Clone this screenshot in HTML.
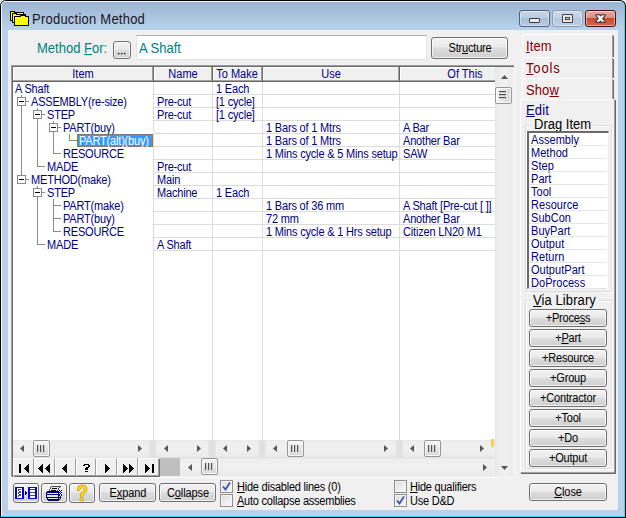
<!DOCTYPE html><html><head><meta charset="utf-8"><style>
html,body{margin:0;padding:0;width:626px;height:518px;overflow:hidden;background:#fff;}
*{box-sizing:border-box;}
div{position:absolute;}
.t{position:absolute;white-space:pre;line-height:1;font-family:"Liberation Sans",sans-serif;}
u{text-decoration:underline;text-decoration-thickness:1px;text-underline-offset:1px;text-decoration-skip-ink:none;}
.btn{border:1px solid #707070;border-radius:3px;background:linear-gradient(#f2f2f2 0%,#ebebeb 45%,#dddddd 50%,#cfcfcf 100%);box-shadow:inset 0 0 0 1px rgba(255,255,255,0.7);}
</style></head><body>
<div style="position:absolute;left:0px;top:0px;width:626px;height:518px;background:#000;border-radius:6px 6px 0 0;"></div>
<div style="position:absolute;left:1px;top:1px;width:624px;height:516px;background:#3fd8f0;border-radius:5px 5px 0 0;"></div>
<div style="position:absolute;left:1px;top:1px;width:623px;height:515px;background:#f4f8fc;border-radius:5px 5px 0 0;"></div>
<div style="position:absolute;left:2px;top:2px;width:622px;height:514px;background:#b9d1ea;border-radius:4px 4px 0 0;"></div>
<div style="position:absolute;left:2px;top:2px;width:622px;height:28px;background:linear-gradient(#9cb4d1,#b9d3eb);border-radius:4px 4px 0 0;"></div>
<div style="position:absolute;left:8px;top:30px;width:610px;height:480px;background:#f0f0f0;"></div>
<svg style="position:absolute;left:10px;top:11px" width="19" height="15" shape-rendering="crispEdges"><rect x="0" y="0" width="5" height="1" fill="#000000"/><rect x="0" y="1" width="1" height="1" fill="#000000"/><rect x="1" y="1" width="3" height="1" fill="#ffff00"/><rect x="4" y="1" width="10" height="1" fill="#000000"/><rect x="0" y="2" width="1" height="1" fill="#000000"/><rect x="1" y="2" width="1" height="1" fill="#ffff00"/><rect x="2" y="2" width="5" height="1" fill="#000000"/><rect x="7" y="2" width="6" height="1" fill="#ffff00"/><rect x="13" y="2" width="1" height="1" fill="#000000"/><rect x="0" y="3" width="1" height="1" fill="#000000"/><rect x="1" y="3" width="1" height="1" fill="#ffff00"/><rect x="2" y="3" width="1" height="1" fill="#000000"/><rect x="3" y="3" width="3" height="1" fill="#ffff00"/><rect x="6" y="3" width="10" height="1" fill="#000000"/><rect x="0" y="4" width="1" height="1" fill="#000000"/><rect x="1" y="4" width="1" height="1" fill="#ffff00"/><rect x="2" y="4" width="1" height="1" fill="#000000"/><rect x="3" y="4" width="7" height="1" fill="#ffff00"/><rect x="10" y="4" width="6" height="1" fill="#000000"/><rect x="0" y="5" width="1" height="1" fill="#000000"/><rect x="1" y="5" width="1" height="1" fill="#ffff00"/><rect x="2" y="5" width="1" height="1" fill="#000000"/><rect x="3" y="5" width="1" height="1" fill="#ffff00"/><rect x="4" y="5" width="7" height="1" fill="#000000"/><rect x="11" y="5" width="4" height="1" fill="#ffff00"/><rect x="15" y="5" width="4" height="1" fill="#000000"/><rect x="0" y="6" width="1" height="1" fill="#000000"/><rect x="1" y="6" width="1" height="1" fill="#ffff00"/><rect x="2" y="6" width="1" height="1" fill="#000000"/><rect x="3" y="6" width="1" height="1" fill="#ffff00"/><rect x="4" y="6" width="1" height="1" fill="#000000"/><rect x="5" y="6" width="13" height="1" fill="#ffff00"/><rect x="18" y="6" width="1" height="1" fill="#000000"/><rect x="0" y="7" width="1" height="1" fill="#000000"/><rect x="1" y="7" width="1" height="1" fill="#ffff00"/><rect x="2" y="7" width="1" height="1" fill="#000000"/><rect x="3" y="7" width="1" height="1" fill="#ffff00"/><rect x="4" y="7" width="1" height="1" fill="#000000"/><rect x="5" y="7" width="13" height="1" fill="#ffff00"/><rect x="18" y="7" width="1" height="1" fill="#000000"/><rect x="0" y="8" width="1" height="1" fill="#000000"/><rect x="1" y="8" width="1" height="1" fill="#ffff00"/><rect x="2" y="8" width="1" height="1" fill="#000000"/><rect x="3" y="8" width="1" height="1" fill="#ffff00"/><rect x="4" y="8" width="1" height="1" fill="#000000"/><rect x="5" y="8" width="13" height="1" fill="#ffff00"/><rect x="18" y="8" width="1" height="1" fill="#000000"/><rect x="0" y="9" width="3" height="1" fill="#000000"/><rect x="3" y="9" width="1" height="1" fill="#ffff00"/><rect x="4" y="9" width="1" height="1" fill="#000000"/><rect x="5" y="9" width="13" height="1" fill="#ffff00"/><rect x="18" y="9" width="1" height="1" fill="#000000"/><rect x="2" y="10" width="1" height="1" fill="#000000"/><rect x="3" y="10" width="1" height="1" fill="#ffff00"/><rect x="4" y="10" width="1" height="1" fill="#000000"/><rect x="5" y="10" width="13" height="1" fill="#ffff00"/><rect x="18" y="10" width="1" height="1" fill="#000000"/><rect x="2" y="11" width="3" height="1" fill="#000000"/><rect x="5" y="11" width="13" height="1" fill="#ffff00"/><rect x="18" y="11" width="1" height="1" fill="#000000"/><rect x="4" y="12" width="1" height="1" fill="#000000"/><rect x="5" y="12" width="13" height="1" fill="#ffff00"/><rect x="18" y="12" width="1" height="1" fill="#000000"/><rect x="4" y="13" width="1" height="1" fill="#000000"/><rect x="5" y="13" width="13" height="1" fill="#ffff00"/><rect x="18" y="13" width="1" height="1" fill="#000000"/><rect x="4" y="14" width="15" height="1" fill="#000000"/></svg>
<div class="t" style="left:32px;top:12px;font-size:14px;color:#1a1424;letter-spacing:0.25px;transform:scaleX(0.9286);transform-origin:0 0;">Production Method</div>
<div style="left:519px;top:10px;width:31px;height:17px;border:1px solid #4f617a;border-radius:3px;background:linear-gradient(#c7d6e8 0%,#bccde2 45%,#a9bfd9 50%,#b6cbe3 100%);box-shadow:inset 0 0 0 1px rgba(255,255,255,0.45);"></div>
<div style="left:552px;top:10px;width:31px;height:17px;border:1px solid #8a9bb0;border-radius:3px;background:linear-gradient(#c9d8ea 0%,#c3d3e6 45%,#b3c7de 50%,#bccfe5 100%);box-shadow:inset 0 0 0 1px rgba(255,255,255,0.45);"></div>
<div style="left:585px;top:10px;width:31px;height:17px;border:1px solid #4a0f12;border-radius:3px;background:linear-gradient(#e9a99c 0%,#df8f7d 45%,#c94c2f 50%,#d2694c 100%);box-shadow:inset 0 0 0 1px rgba(255,255,255,0.45);"></div>
<div style="position:absolute;left:529px;top:18px;width:11px;height:5px;background:#f0eeea;border:1px solid #353a45;border-radius:1px;"></div>
<div style="position:absolute;left:562px;top:14px;width:11px;height:9px;border:1px solid #3d4352;background:#3d4352;border-radius:1px;"></div>
<div style="position:absolute;left:563px;top:15px;width:9px;height:7px;background:#ebe6de;"></div>
<div style="position:absolute;left:565px;top:17px;width:5px;height:3px;border:1px solid #3d4352;background:#c8d0da;"></div>
<svg style="position:absolute;left:585px;top:10px" width="31" height="17">
<g stroke="#2a2d3c" stroke-width="2" stroke-linejoin="round" fill="#2a2d3c">
<polygon points="11.2,5.2 14.4,5.2 19.8,11.8 16.6,11.8"/>
<polygon points="16.6,5.2 19.8,5.2 14.4,11.8 11.2,11.8"/>
</g>
<g fill="#f4f4f4">
<polygon points="11.2,5.2 14.4,5.2 19.8,11.8 16.6,11.8"/>
<polygon points="16.6,5.2 19.8,5.2 14.4,11.8 11.2,11.8"/>
</g>
</svg>
<div class="t" style="left:37px;top:41px;font-size:14px;color:#008080;letter-spacing:0px;transform:scaleX(0.9286);transform-origin:0 0;">Method <u>F</u>or:</div>
<div class="btn" style="left:113px;top:41px;width:18px;height:18px;"></div>
<svg style="position:absolute;left:118px;top:53px" width="11" height="2" shape-rendering="crispEdges"><rect x="0" y="0" width="1" height="1" fill="#000"/><rect x="3" y="0" width="1" height="1" fill="#000"/><rect x="6" y="0" width="1" height="1" fill="#000"/></svg>
<svg style="position:absolute;left:119px;top:53px" width="7" height="1" shape-rendering="crispEdges"><rect x="0" y="0" width="1" height="1" fill="#808080"/><rect x="3" y="0" width="1" height="1" fill="#808080"/><rect x="6" y="0" width="1" height="1" fill="#808080"/></svg>
<svg style="position:absolute;left:118px;top:54px" width="7" height="1" shape-rendering="crispEdges"><rect x="0" y="0" width="1" height="1" fill="#a0a0a0"/><rect x="3" y="0" width="1" height="1" fill="#a0a0a0"/><rect x="6" y="0" width="1" height="1" fill="#a0a0a0"/></svg>
<div style="position:absolute;left:136px;top:35px;width:291px;height:25px;background:#fff;border:1px solid #e2e3ea;border-top-color:#abadb3;"></div>
<div class="t" style="left:139px;top:41px;font-size:14px;color:#008080;transform:scaleX(0.9286);transform-origin:0 0;">A Shaft</div>
<div class="btn" style="left:431px;top:37px;width:77px;height:22px;"></div>
<div class="t" style="left:269.5px;width:400px;text-align:center;top:42px;font-size:12px;color:#000;letter-spacing:-0.2px;transform:scaleX(0.9167);transform-origin:50% 0;">Str<u>u</u>cture</div>
<div style="position:absolute;left:13px;top:82px;width:482px;height:358px;background:#fff;"></div>
<div style="position:absolute;left:11px;top:65px;width:1px;height:412px;background:#a0a0a0;"></div>
<div style="position:absolute;left:12px;top:66px;width:1px;height:411px;background:#696969;"></div>
<div style="position:absolute;left:11px;top:65px;width:503px;height:1px;background:#a0a0a0;"></div>
<div style="position:absolute;left:12px;top:66px;width:502px;height:1px;background:#696969;"></div>
<div style="position:absolute;left:13px;top:67px;width:482px;height:13px;background:#f0f0f0;"></div>
<div style="position:absolute;left:13px;top:80px;width:482px;height:1px;background:#a0a0a0;"></div>
<div style="position:absolute;left:13px;top:81px;width:482px;height:1px;background:#696969;"></div>
<div style="position:absolute;left:13px;top:67px;width:139px;height:1px;background:#fff;"></div>
<div style="position:absolute;left:13px;top:67px;width:1px;height:13px;background:#fff;"></div>
<div style="position:absolute;left:154px;top:67px;width:57px;height:1px;background:#fff;"></div>
<div style="position:absolute;left:154px;top:67px;width:1px;height:13px;background:#fff;"></div>
<div style="position:absolute;left:213px;top:67px;width:48px;height:1px;background:#fff;"></div>
<div style="position:absolute;left:213px;top:67px;width:1px;height:13px;background:#fff;"></div>
<div style="position:absolute;left:263px;top:67px;width:135px;height:1px;background:#fff;"></div>
<div style="position:absolute;left:263px;top:67px;width:1px;height:13px;background:#fff;"></div>
<div style="position:absolute;left:400px;top:67px;width:95px;height:1px;background:#fff;"></div>
<div style="position:absolute;left:400px;top:67px;width:1px;height:13px;background:#fff;"></div>
<div style="position:absolute;left:152px;top:67px;width:1px;height:13px;background:#a0a0a0;"></div>
<div style="position:absolute;left:153px;top:67px;width:1px;height:14px;background:#696969;"></div>
<div style="position:absolute;left:211px;top:67px;width:1px;height:13px;background:#a0a0a0;"></div>
<div style="position:absolute;left:212px;top:67px;width:1px;height:14px;background:#696969;"></div>
<div style="position:absolute;left:261px;top:67px;width:1px;height:13px;background:#a0a0a0;"></div>
<div style="position:absolute;left:262px;top:67px;width:1px;height:14px;background:#696969;"></div>
<div style="position:absolute;left:398px;top:67px;width:1px;height:13px;background:#a0a0a0;"></div>
<div style="position:absolute;left:399px;top:67px;width:1px;height:14px;background:#696969;"></div>
<div class="t" style="left:-117.5px;width:400px;text-align:center;top:68px;font-size:12px;color:#000080;transform:scaleX(0.9167);transform-origin:50% 0;">Item</div>
<div class="t" style="left:-17.5px;width:400px;text-align:center;top:68px;font-size:12px;color:#000080;transform:scaleX(0.9167);transform-origin:50% 0;">Name</div>
<div class="t" style="left:37px;width:400px;text-align:center;top:68px;font-size:12px;color:#000080;transform:scaleX(0.9167);transform-origin:50% 0;">To Make</div>
<div class="t" style="left:130.5px;width:400px;text-align:center;top:68px;font-size:12px;color:#000080;transform:scaleX(0.9167);transform-origin:50% 0;">Use</div>
<div class="t" style="left:265px;width:400px;text-align:center;top:68px;font-size:12px;color:#000080;transform:scaleX(0.9167);transform-origin:50% 0;">Of This</div>
<div style="position:absolute;left:153px;top:82px;width:1px;height:358px;background:#dcdcdc;"></div>
<div style="position:absolute;left:212px;top:82px;width:1px;height:358px;background:#dcdcdc;"></div>
<div style="position:absolute;left:262px;top:82px;width:1px;height:358px;background:#dcdcdc;"></div>
<div style="position:absolute;left:399px;top:82px;width:1px;height:358px;background:#dcdcdc;"></div>
<div style="position:absolute;left:153px;top:94px;width:342px;height:1px;background:#dcdcdc;"></div>
<div style="position:absolute;left:153px;top:107px;width:342px;height:1px;background:#dcdcdc;"></div>
<div style="position:absolute;left:153px;top:120px;width:342px;height:1px;background:#dcdcdc;"></div>
<div style="position:absolute;left:153px;top:133px;width:342px;height:1px;background:#dcdcdc;"></div>
<div style="position:absolute;left:153px;top:146px;width:342px;height:1px;background:#dcdcdc;"></div>
<div style="position:absolute;left:153px;top:159px;width:342px;height:1px;background:#dcdcdc;"></div>
<div style="position:absolute;left:153px;top:172px;width:342px;height:1px;background:#dcdcdc;"></div>
<div style="position:absolute;left:153px;top:185px;width:342px;height:1px;background:#dcdcdc;"></div>
<div style="position:absolute;left:153px;top:198px;width:342px;height:1px;background:#dcdcdc;"></div>
<div style="position:absolute;left:153px;top:211px;width:342px;height:1px;background:#dcdcdc;"></div>
<div style="position:absolute;left:153px;top:224px;width:342px;height:1px;background:#dcdcdc;"></div>
<div style="position:absolute;left:153px;top:237px;width:342px;height:1px;background:#dcdcdc;"></div>
<div style="position:absolute;left:153px;top:250px;width:342px;height:1px;background:#dcdcdc;"></div>
<div class="t" style="left:15px;top:83px;font-size:12px;color:#000080;letter-spacing:-0.2px;transform:scaleX(0.9167);transform-origin:0 0;">A Shaft</div>
<div class="t" style="left:216px;top:83px;font-size:12px;color:#000080;letter-spacing:-0.2px;transform:scaleX(0.9167);transform-origin:0 0;">1 Each</div>
<div class="t" style="left:31px;top:96px;font-size:12px;color:#000080;letter-spacing:-0.2px;transform:scaleX(0.9167);transform-origin:0 0;">ASSEMBLY(re-size)</div>
<div class="t" style="left:157px;top:96px;font-size:12px;color:#000080;letter-spacing:-0.2px;transform:scaleX(0.9167);transform-origin:0 0;">Pre-cut</div>
<div class="t" style="left:216px;top:96px;font-size:12px;color:#000080;letter-spacing:-0.2px;transform:scaleX(0.9167);transform-origin:0 0;">[1 cycle]</div>
<div class="t" style="left:47px;top:109px;font-size:12px;color:#000080;letter-spacing:-0.2px;transform:scaleX(0.9167);transform-origin:0 0;">STEP</div>
<div class="t" style="left:157px;top:109px;font-size:12px;color:#000080;letter-spacing:-0.2px;transform:scaleX(0.9167);transform-origin:0 0;">Pre-cut</div>
<div class="t" style="left:216px;top:109px;font-size:12px;color:#000080;letter-spacing:-0.2px;transform:scaleX(0.9167);transform-origin:0 0;">[1 cycle]</div>
<div class="t" style="left:63px;top:122px;font-size:12px;color:#000080;letter-spacing:-0.2px;transform:scaleX(0.9167);transform-origin:0 0;">PART(buy)</div>
<div class="t" style="left:266px;top:122px;font-size:12px;color:#000080;letter-spacing:-0.2px;transform:scaleX(0.9167);transform-origin:0 0;">1 Bars of 1 Mtrs</div>
<div class="t" style="left:403px;top:122px;font-size:12px;color:#000080;letter-spacing:-0.2px;transform:scaleX(0.9167);transform-origin:0 0;">A Bar</div>
<div style="position:absolute;left:77px;top:134px;width:76px;height:13px;background:#3399ff;border:1px dotted #c06000;"></div>
<div class="t" style="left:79px;top:135px;font-size:12px;color:#fff;letter-spacing:-0.2px;transform:scaleX(0.9167);transform-origin:0 0;">PART(alt)(buy)</div>
<div class="t" style="left:266px;top:135px;font-size:12px;color:#000080;letter-spacing:-0.2px;transform:scaleX(0.9167);transform-origin:0 0;">1 Bars of 1 Mtrs</div>
<div class="t" style="left:403px;top:135px;font-size:12px;color:#000080;letter-spacing:-0.2px;transform:scaleX(0.9167);transform-origin:0 0;">Another Bar</div>
<div class="t" style="left:63px;top:148px;font-size:12px;color:#000080;letter-spacing:-0.2px;transform:scaleX(0.9167);transform-origin:0 0;">RESOURCE</div>
<div class="t" style="left:266px;top:148px;font-size:12px;color:#000080;letter-spacing:-0.2px;transform:scaleX(0.9167);transform-origin:0 0;">1 Mins cycle &amp; 5 Mins setup</div>
<div class="t" style="left:403px;top:148px;font-size:12px;color:#000080;letter-spacing:-0.2px;transform:scaleX(0.9167);transform-origin:0 0;">SAW</div>
<div class="t" style="left:47px;top:161px;font-size:12px;color:#000080;letter-spacing:-0.2px;transform:scaleX(0.9167);transform-origin:0 0;">MADE</div>
<div class="t" style="left:157px;top:161px;font-size:12px;color:#000080;letter-spacing:-0.2px;transform:scaleX(0.9167);transform-origin:0 0;">Pre-cut</div>
<div class="t" style="left:31px;top:174px;font-size:12px;color:#000080;letter-spacing:-0.2px;transform:scaleX(0.9167);transform-origin:0 0;">METHOD(make)</div>
<div class="t" style="left:157px;top:174px;font-size:12px;color:#000080;letter-spacing:-0.2px;transform:scaleX(0.9167);transform-origin:0 0;">Main</div>
<div class="t" style="left:47px;top:187px;font-size:12px;color:#000080;letter-spacing:-0.2px;transform:scaleX(0.9167);transform-origin:0 0;">STEP</div>
<div class="t" style="left:157px;top:187px;font-size:12px;color:#000080;letter-spacing:-0.2px;transform:scaleX(0.9167);transform-origin:0 0;">Machine</div>
<div class="t" style="left:216px;top:187px;font-size:12px;color:#000080;letter-spacing:-0.2px;transform:scaleX(0.9167);transform-origin:0 0;">1 Each</div>
<div class="t" style="left:63px;top:200px;font-size:12px;color:#000080;letter-spacing:-0.2px;transform:scaleX(0.9167);transform-origin:0 0;">PART(make)</div>
<div class="t" style="left:266px;top:200px;font-size:12px;color:#000080;letter-spacing:-0.2px;transform:scaleX(0.9167);transform-origin:0 0;">1 Bars of 36 mm</div>
<div class="t" style="left:403px;top:200px;font-size:12px;color:#000080;letter-spacing:-0.2px;transform:scaleX(0.9167);transform-origin:0 0;">A Shaft [Pre-cut [ ]]</div>
<div class="t" style="left:63px;top:213px;font-size:12px;color:#000080;letter-spacing:-0.2px;transform:scaleX(0.9167);transform-origin:0 0;">PART(buy)</div>
<div class="t" style="left:266px;top:213px;font-size:12px;color:#000080;letter-spacing:-0.2px;transform:scaleX(0.9167);transform-origin:0 0;">72 mm</div>
<div class="t" style="left:403px;top:213px;font-size:12px;color:#000080;letter-spacing:-0.2px;transform:scaleX(0.9167);transform-origin:0 0;">Another Bar</div>
<div class="t" style="left:63px;top:226px;font-size:12px;color:#000080;letter-spacing:-0.2px;transform:scaleX(0.9167);transform-origin:0 0;">RESOURCE</div>
<div class="t" style="left:266px;top:226px;font-size:12px;color:#000080;letter-spacing:-0.2px;transform:scaleX(0.9167);transform-origin:0 0;">1 Mins cycle &amp; 1 Hrs setup</div>
<div class="t" style="left:403px;top:226px;font-size:12px;color:#000080;letter-spacing:-0.2px;transform:scaleX(0.9167);transform-origin:0 0;">Citizen LN20 M1</div>
<div class="t" style="left:47px;top:239px;font-size:12px;color:#000080;letter-spacing:-0.2px;transform:scaleX(0.9167);transform-origin:0 0;">MADE</div>
<div class="t" style="left:157px;top:239px;font-size:12px;color:#000080;letter-spacing:-0.2px;transform:scaleX(0.9167);transform-origin:0 0;">A Shaft</div>
<div style="position:absolute;left:21px;top:95px;width:1px;height:2px;background:#8a8a8a;"></div>
<div style="position:absolute;left:17px;top:97px;width:9px;height:9px;border:1px solid #8a8a8a;background:#fff;"></div>
<div style="position:absolute;left:19px;top:101px;width:5px;height:1px;background:#000;"></div>
<div style="position:absolute;left:26px;top:101px;width:3px;height:1px;background:#8a8a8a;"></div>
<div style="position:absolute;left:21px;top:106px;width:1px;height:67px;background:#8a8a8a;"></div>
<div style="position:absolute;left:37px;top:108px;width:1px;height:2px;background:#8a8a8a;"></div>
<div style="position:absolute;left:33px;top:110px;width:9px;height:9px;border:1px solid #8a8a8a;background:#fff;"></div>
<div style="position:absolute;left:35px;top:114px;width:5px;height:1px;background:#000;"></div>
<div style="position:absolute;left:42px;top:114px;width:3px;height:1px;background:#8a8a8a;"></div>
<div style="position:absolute;left:37px;top:119px;width:1px;height:41px;background:#8a8a8a;"></div>
<div style="position:absolute;left:53px;top:121px;width:1px;height:2px;background:#8a8a8a;"></div>
<div style="position:absolute;left:49px;top:123px;width:9px;height:9px;border:1px solid #8a8a8a;background:#fff;"></div>
<div style="position:absolute;left:51px;top:127px;width:5px;height:1px;background:#000;"></div>
<div style="position:absolute;left:58px;top:127px;width:3px;height:1px;background:#8a8a8a;"></div>
<div style="position:absolute;left:53px;top:132px;width:1px;height:15px;background:#8a8a8a;"></div>
<div style="position:absolute;left:69px;top:134px;width:1px;height:7px;background:#8a8a8a;"></div>
<div style="position:absolute;left:69px;top:140px;width:8px;height:1px;background:#8a8a8a;"></div>
<div style="position:absolute;left:53px;top:147px;width:1px;height:7px;background:#8a8a8a;"></div>
<div style="position:absolute;left:53px;top:153px;width:8px;height:1px;background:#8a8a8a;"></div>
<div style="position:absolute;left:37px;top:160px;width:1px;height:7px;background:#8a8a8a;"></div>
<div style="position:absolute;left:37px;top:166px;width:8px;height:1px;background:#8a8a8a;"></div>
<div style="position:absolute;left:21px;top:173px;width:1px;height:2px;background:#8a8a8a;"></div>
<div style="position:absolute;left:17px;top:175px;width:9px;height:9px;border:1px solid #8a8a8a;background:#fff;"></div>
<div style="position:absolute;left:19px;top:179px;width:5px;height:1px;background:#000;"></div>
<div style="position:absolute;left:26px;top:179px;width:3px;height:1px;background:#8a8a8a;"></div>
<div style="position:absolute;left:37px;top:186px;width:1px;height:2px;background:#8a8a8a;"></div>
<div style="position:absolute;left:33px;top:188px;width:9px;height:9px;border:1px solid #8a8a8a;background:#fff;"></div>
<div style="position:absolute;left:35px;top:192px;width:5px;height:1px;background:#000;"></div>
<div style="position:absolute;left:42px;top:192px;width:3px;height:1px;background:#8a8a8a;"></div>
<div style="position:absolute;left:37px;top:197px;width:1px;height:41px;background:#8a8a8a;"></div>
<div style="position:absolute;left:53px;top:199px;width:1px;height:7px;background:#8a8a8a;"></div>
<div style="position:absolute;left:53px;top:205px;width:8px;height:1px;background:#8a8a8a;"></div>
<div style="position:absolute;left:53px;top:205px;width:1px;height:7px;background:#8a8a8a;"></div>
<div style="position:absolute;left:53px;top:212px;width:1px;height:7px;background:#8a8a8a;"></div>
<div style="position:absolute;left:53px;top:218px;width:8px;height:1px;background:#8a8a8a;"></div>
<div style="position:absolute;left:53px;top:218px;width:1px;height:7px;background:#8a8a8a;"></div>
<div style="position:absolute;left:53px;top:225px;width:1px;height:7px;background:#8a8a8a;"></div>
<div style="position:absolute;left:53px;top:231px;width:8px;height:1px;background:#8a8a8a;"></div>
<div style="position:absolute;left:37px;top:238px;width:1px;height:7px;background:#8a8a8a;"></div>
<div style="position:absolute;left:37px;top:244px;width:8px;height:1px;background:#8a8a8a;"></div>
<div style="position:absolute;left:13px;top:440px;width:482px;height:18px;background:linear-gradient(#e6e6e6 0px,#eeeeee 1px,#f0f0f0 9px,#ebebeb 17px);"></div>
<div style="position:absolute;left:149px;top:440px;width:8px;height:18px;background:linear-gradient(90deg,#e6e6e6,#dedede 50%,#e6e6e6);"></div>
<div style="position:absolute;left:208px;top:440px;width:8px;height:18px;background:linear-gradient(90deg,#e6e6e6,#dedede 50%,#e6e6e6);"></div>
<div style="position:absolute;left:258px;top:440px;width:8px;height:18px;background:linear-gradient(90deg,#e6e6e6,#dedede 50%,#e6e6e6);"></div>
<div style="position:absolute;left:395px;top:440px;width:8px;height:18px;background:linear-gradient(90deg,#e6e6e6,#dedede 50%,#e6e6e6);"></div>
<svg style="position:absolute;left:20px;top:445px" width="4" height="7"><polygon points="4,0 0,3.5 4,7" fill="#565656"/></svg>
<svg style="position:absolute;left:138px;top:445px" width="4" height="7"><polygon points="0,0 4,3.5 0,7" fill="#565656"/></svg>
<svg style="position:absolute;left:164px;top:445px" width="4" height="7"><polygon points="4,0 0,3.5 4,7" fill="#565656"/></svg>
<svg style="position:absolute;left:197px;top:445px" width="4" height="7"><polygon points="0,0 4,3.5 0,7" fill="#565656"/></svg>
<svg style="position:absolute;left:223px;top:445px" width="4" height="7"><polygon points="4,0 0,3.5 4,7" fill="#565656"/></svg>
<svg style="position:absolute;left:247px;top:445px" width="4" height="7"><polygon points="0,0 4,3.5 0,7" fill="#565656"/></svg>
<svg style="position:absolute;left:273px;top:445px" width="4" height="7"><polygon points="4,0 0,3.5 4,7" fill="#565656"/></svg>
<svg style="position:absolute;left:384px;top:445px" width="4" height="7"><polygon points="0,0 4,3.5 0,7" fill="#565656"/></svg>
<svg style="position:absolute;left:410px;top:445px" width="4" height="7"><polygon points="4,0 0,3.5 4,7" fill="#565656"/></svg>
<svg style="position:absolute;left:480px;top:445px" width="4" height="7"><polygon points="0,0 4,3.5 0,7" fill="#565656"/></svg>
<div style="left:33px;top:440px;width:17px;height:17px;border:1px solid #979797;border-radius:2px;background:linear-gradient(#f6f6f6,#e6e6e6 50%,#d8d8d8);box-shadow:inset 0 0 0 1px rgba(255,255,255,.8);"></div>
<div style="position:absolute;left:37px;top:445px;width:2px;height:7px;background:linear-gradient(90deg,#505050 50%,#c8c8c8 50%);"></div>
<div style="position:absolute;left:40px;top:445px;width:2px;height:7px;background:linear-gradient(90deg,#505050 50%,#c8c8c8 50%);"></div>
<div style="position:absolute;left:43px;top:445px;width:2px;height:7px;background:linear-gradient(90deg,#505050 50%,#c8c8c8 50%);"></div>
<div style="left:287px;top:440px;width:17px;height:17px;border:1px solid #979797;border-radius:2px;background:linear-gradient(#f6f6f6,#e6e6e6 50%,#d8d8d8);box-shadow:inset 0 0 0 1px rgba(255,255,255,.8);"></div>
<div style="position:absolute;left:291px;top:445px;width:2px;height:7px;background:linear-gradient(90deg,#505050 50%,#c8c8c8 50%);"></div>
<div style="position:absolute;left:294px;top:445px;width:2px;height:7px;background:linear-gradient(90deg,#505050 50%,#c8c8c8 50%);"></div>
<div style="position:absolute;left:297px;top:445px;width:2px;height:7px;background:linear-gradient(90deg,#505050 50%,#c8c8c8 50%);"></div>
<div style="left:424px;top:440px;width:17px;height:17px;border:1px solid #979797;border-radius:2px;background:linear-gradient(#f6f6f6,#e6e6e6 50%,#d8d8d8);box-shadow:inset 0 0 0 1px rgba(255,255,255,.8);"></div>
<div style="position:absolute;left:428px;top:445px;width:2px;height:7px;background:linear-gradient(90deg,#505050 50%,#c8c8c8 50%);"></div>
<div style="position:absolute;left:431px;top:445px;width:2px;height:7px;background:linear-gradient(90deg,#505050 50%,#c8c8c8 50%);"></div>
<div style="position:absolute;left:434px;top:445px;width:2px;height:7px;background:linear-gradient(90deg,#505050 50%,#c8c8c8 50%);"></div>
<div style="position:absolute;left:491px;top:439px;width:3px;height:8px;background:#f8d050;"></div>
<div style="position:absolute;left:13px;top:457px;width:482px;height:1px;background:#e0e0e0;"></div>
<div style="left:13px;top:458px;width:21px;height:18px;background:#f0f0f0;border-left:1px solid #fff;border-top:1px solid #fff;border-right:1px solid #a0a0a0;border-bottom:1px solid #a0a0a0;box-shadow:1px 1px 0 #696969;"></div>
<div style="left:34px;top:458px;width:21px;height:18px;background:#f0f0f0;border-left:1px solid #fff;border-top:1px solid #fff;border-right:1px solid #a0a0a0;border-bottom:1px solid #a0a0a0;box-shadow:1px 1px 0 #696969;"></div>
<div style="left:55px;top:458px;width:21px;height:18px;background:#f0f0f0;border-left:1px solid #fff;border-top:1px solid #fff;border-right:1px solid #a0a0a0;border-bottom:1px solid #a0a0a0;box-shadow:1px 1px 0 #696969;"></div>
<div style="left:76px;top:458px;width:20px;height:18px;background:#f0f0f0;border-left:1px solid #fff;border-top:1px solid #fff;border-right:1px solid #a0a0a0;border-bottom:1px solid #a0a0a0;box-shadow:1px 1px 0 #696969;"></div>
<div style="left:96px;top:458px;width:21px;height:18px;background:#f0f0f0;border-left:1px solid #fff;border-top:1px solid #fff;border-right:1px solid #a0a0a0;border-bottom:1px solid #a0a0a0;box-shadow:1px 1px 0 #696969;"></div>
<div style="left:117px;top:458px;width:21px;height:18px;background:#f0f0f0;border-left:1px solid #fff;border-top:1px solid #fff;border-right:1px solid #a0a0a0;border-bottom:1px solid #a0a0a0;box-shadow:1px 1px 0 #696969;"></div>
<div style="left:138px;top:458px;width:21px;height:18px;background:#f0f0f0;border-left:1px solid #fff;border-top:1px solid #fff;border-right:1px solid #a0a0a0;border-bottom:1px solid #a0a0a0;box-shadow:1px 1px 0 #696969;"></div>
<svg style="position:absolute;left:19px;top:464px" width="10" height="9" shape-rendering="crispEdges"><rect x="0" y="0" width="2" height="1" fill="#000000"/><rect x="9" y="0" width="1" height="1" fill="#000000"/><rect x="0" y="1" width="2" height="1" fill="#000000"/><rect x="8" y="1" width="2" height="1" fill="#000000"/><rect x="0" y="2" width="2" height="1" fill="#000000"/><rect x="7" y="2" width="3" height="1" fill="#000000"/><rect x="0" y="3" width="2" height="1" fill="#000000"/><rect x="6" y="3" width="4" height="1" fill="#000000"/><rect x="0" y="4" width="2" height="1" fill="#000000"/><rect x="5" y="4" width="5" height="1" fill="#000000"/><rect x="0" y="5" width="2" height="1" fill="#000000"/><rect x="6" y="5" width="4" height="1" fill="#000000"/><rect x="0" y="6" width="2" height="1" fill="#000000"/><rect x="7" y="6" width="3" height="1" fill="#000000"/><rect x="0" y="7" width="2" height="1" fill="#000000"/><rect x="8" y="7" width="2" height="1" fill="#000000"/><rect x="0" y="8" width="2" height="1" fill="#000000"/><rect x="9" y="8" width="1" height="1" fill="#000000"/></svg>
<svg style="position:absolute;left:38px;top:464px" width="12" height="9" shape-rendering="crispEdges"><rect x="4" y="0" width="1" height="1" fill="#000000"/><rect x="11" y="0" width="1" height="1" fill="#000000"/><rect x="3" y="1" width="2" height="1" fill="#000000"/><rect x="10" y="1" width="2" height="1" fill="#000000"/><rect x="2" y="2" width="3" height="1" fill="#000000"/><rect x="9" y="2" width="3" height="1" fill="#000000"/><rect x="1" y="3" width="4" height="1" fill="#000000"/><rect x="8" y="3" width="4" height="1" fill="#000000"/><rect x="0" y="4" width="5" height="1" fill="#000000"/><rect x="7" y="4" width="5" height="1" fill="#000000"/><rect x="1" y="5" width="4" height="1" fill="#000000"/><rect x="8" y="5" width="4" height="1" fill="#000000"/><rect x="2" y="6" width="3" height="1" fill="#000000"/><rect x="9" y="6" width="3" height="1" fill="#000000"/><rect x="3" y="7" width="2" height="1" fill="#000000"/><rect x="10" y="7" width="2" height="1" fill="#000000"/><rect x="4" y="8" width="1" height="1" fill="#000000"/><rect x="11" y="8" width="1" height="1" fill="#000000"/></svg>
<svg style="position:absolute;left:62px;top:464px" width="5" height="9" shape-rendering="crispEdges"><rect x="4" y="0" width="1" height="1" fill="#000000"/><rect x="3" y="1" width="2" height="1" fill="#000000"/><rect x="2" y="2" width="3" height="1" fill="#000000"/><rect x="1" y="3" width="4" height="1" fill="#000000"/><rect x="0" y="4" width="5" height="1" fill="#000000"/><rect x="1" y="5" width="4" height="1" fill="#000000"/><rect x="2" y="6" width="3" height="1" fill="#000000"/><rect x="3" y="7" width="2" height="1" fill="#000000"/><rect x="4" y="8" width="1" height="1" fill="#000000"/></svg>
<svg style="position:absolute;left:83px;top:464px" width="7" height="8" shape-rendering="crispEdges"><rect x="1" y="0" width="5" height="1" fill="#000000"/><rect x="0" y="1" width="2" height="1" fill="#000000"/><rect x="5" y="1" width="2" height="1" fill="#000000"/><rect x="5" y="2" width="2" height="1" fill="#000000"/><rect x="3" y="3" width="3" height="1" fill="#000000"/><rect x="2" y="4" width="3" height="1" fill="#000000"/><rect x="2" y="5" width="3" height="1" fill="#000000"/><rect x="2" y="7" width="3" height="1" fill="#000000"/></svg>
<svg style="position:absolute;left:105px;top:464px" width="5" height="9" shape-rendering="crispEdges"><rect x="0" y="0" width="1" height="1" fill="#000000"/><rect x="0" y="1" width="2" height="1" fill="#000000"/><rect x="0" y="2" width="3" height="1" fill="#000000"/><rect x="0" y="3" width="4" height="1" fill="#000000"/><rect x="0" y="4" width="5" height="1" fill="#000000"/><rect x="0" y="5" width="4" height="1" fill="#000000"/><rect x="0" y="6" width="3" height="1" fill="#000000"/><rect x="0" y="7" width="2" height="1" fill="#000000"/><rect x="0" y="8" width="1" height="1" fill="#000000"/></svg>
<svg style="position:absolute;left:123px;top:464px" width="11" height="9" shape-rendering="crispEdges"><rect x="0" y="0" width="1" height="1" fill="#000000"/><rect x="6" y="0" width="1" height="1" fill="#000000"/><rect x="0" y="1" width="2" height="1" fill="#000000"/><rect x="6" y="1" width="2" height="1" fill="#000000"/><rect x="0" y="2" width="3" height="1" fill="#000000"/><rect x="6" y="2" width="3" height="1" fill="#000000"/><rect x="0" y="3" width="4" height="1" fill="#000000"/><rect x="6" y="3" width="4" height="1" fill="#000000"/><rect x="0" y="4" width="5" height="1" fill="#000000"/><rect x="6" y="4" width="5" height="1" fill="#000000"/><rect x="0" y="5" width="4" height="1" fill="#000000"/><rect x="6" y="5" width="4" height="1" fill="#000000"/><rect x="0" y="6" width="3" height="1" fill="#000000"/><rect x="6" y="6" width="3" height="1" fill="#000000"/><rect x="0" y="7" width="2" height="1" fill="#000000"/><rect x="6" y="7" width="2" height="1" fill="#000000"/><rect x="0" y="8" width="1" height="1" fill="#000000"/><rect x="6" y="8" width="1" height="1" fill="#000000"/></svg>
<svg style="position:absolute;left:145px;top:464px" width="9" height="9" shape-rendering="crispEdges"><rect x="0" y="0" width="1" height="1" fill="#000000"/><rect x="7" y="0" width="2" height="1" fill="#000000"/><rect x="0" y="1" width="2" height="1" fill="#000000"/><rect x="7" y="1" width="2" height="1" fill="#000000"/><rect x="0" y="2" width="3" height="1" fill="#000000"/><rect x="7" y="2" width="2" height="1" fill="#000000"/><rect x="0" y="3" width="4" height="1" fill="#000000"/><rect x="7" y="3" width="2" height="1" fill="#000000"/><rect x="0" y="4" width="5" height="1" fill="#000000"/><rect x="7" y="4" width="2" height="1" fill="#000000"/><rect x="0" y="5" width="4" height="1" fill="#000000"/><rect x="7" y="5" width="2" height="1" fill="#000000"/><rect x="0" y="6" width="3" height="1" fill="#000000"/><rect x="7" y="6" width="2" height="1" fill="#000000"/><rect x="0" y="7" width="2" height="1" fill="#000000"/><rect x="7" y="7" width="2" height="1" fill="#000000"/><rect x="0" y="8" width="1" height="1" fill="#000000"/><rect x="7" y="8" width="2" height="1" fill="#000000"/></svg>
<div style="position:absolute;left:160px;top:458px;width:20px;height:18px;background:#bfbfbf;"></div>
<div style="position:absolute;left:180px;top:458px;width:313px;height:18px;background:linear-gradient(#e6e6e6 0px,#eeeeee 1px,#f0f0f0 9px,#ebebeb 17px);"></div>
<svg style="position:absolute;left:188px;top:464px" width="4" height="7"><polygon points="4,0 0,3.5 4,7" fill="#565656"/></svg>
<svg style="position:absolute;left:483px;top:464px" width="4" height="7"><polygon points="0,0 4,3.5 0,7" fill="#565656"/></svg>
<div style="left:201px;top:458px;width:17px;height:17px;border:1px solid #979797;border-radius:2px;background:linear-gradient(#f6f6f6,#e6e6e6 50%,#d8d8d8);box-shadow:inset 0 0 0 1px rgba(255,255,255,.8);"></div>
<div style="position:absolute;left:205px;top:463px;width:2px;height:7px;background:linear-gradient(90deg,#505050 50%,#c8c8c8 50%);"></div>
<div style="position:absolute;left:208px;top:463px;width:2px;height:7px;background:linear-gradient(90deg,#505050 50%,#c8c8c8 50%);"></div>
<div style="position:absolute;left:211px;top:463px;width:2px;height:7px;background:linear-gradient(90deg,#505050 50%,#c8c8c8 50%);"></div>
<div style="position:absolute;left:495px;top:67px;width:18px;height:410px;background:linear-gradient(90deg,#e3e3e3 0px,#ececec 2px,#f0f0f0 9px,#ececec 17px);"></div>
<svg style="position:absolute;left:501px;top:75px" width="7" height="4"><polygon points="0,4 3.5,0 7,4" fill="#565656"/></svg>
<svg style="position:absolute;left:501px;top:466px" width="7" height="4"><polygon points="0,0 7,0 3.5,4" fill="#565656"/></svg>
<div style="left:495px;top:87px;width:17px;height:17px;border:1px solid #979797;border-radius:2px;background:linear-gradient(90deg,#f6f6f6,#e6e6e6 50%,#d8d8d8);box-shadow:inset 0 0 0 1px rgba(255,255,255,.8);"></div>
<div style="position:absolute;left:499px;top:91px;width:7px;height:2px;background:linear-gradient(#505050 50%,#c8c8c8 50%);"></div>
<div style="position:absolute;left:499px;top:94px;width:7px;height:2px;background:linear-gradient(#505050 50%,#c8c8c8 50%);"></div>
<div style="position:absolute;left:499px;top:97px;width:7px;height:2px;background:linear-gradient(#505050 50%,#c8c8c8 50%);"></div>
<div style="position:absolute;left:11px;top:477px;width:504px;height:1px;background:#fbfbfb;"></div>
<div style="position:absolute;left:514px;top:65px;width:1px;height:413px;background:#fbfbfb;"></div>
<div class="btn" style="left:13px;top:483px;width:26px;height:20px;"></div>
<div class="btn" style="left:41px;top:483px;width:26px;height:20px;"></div>
<div class="btn" style="left:69px;top:483px;width:26px;height:20px;"></div>
<svg style="position:absolute;left:15px;top:487px" width="22" height="12" shape-rendering="crispEdges"><rect x="0" y="0" width="9" height="1" fill="#0000f0"/><rect x="13" y="0" width="9" height="1" fill="#0000f0"/><rect x="0" y="1" width="2" height="1" fill="#0000f0"/><rect x="2" y="1" width="5" height="1" fill="#ffffff"/><rect x="7" y="1" width="2" height="1" fill="#0000f0"/><rect x="13" y="1" width="2" height="1" fill="#0000f0"/><rect x="15" y="1" width="5" height="1" fill="#ffffff"/><rect x="20" y="1" width="2" height="1" fill="#0000f0"/><rect x="0" y="2" width="2" height="1" fill="#0000f0"/><rect x="2" y="2" width="1" height="1" fill="#ffffff"/><rect x="3" y="2" width="3" height="1" fill="#505050"/><rect x="6" y="2" width="1" height="1" fill="#ffffff"/><rect x="7" y="2" width="2" height="1" fill="#0000f0"/><rect x="13" y="2" width="2" height="1" fill="#0000f0"/><rect x="15" y="2" width="5" height="1" fill="#505050"/><rect x="20" y="2" width="2" height="1" fill="#0000f0"/><rect x="0" y="3" width="2" height="1" fill="#0000f0"/><rect x="2" y="3" width="1" height="1" fill="#ffffff"/><rect x="3" y="3" width="1" height="1" fill="#505050"/><rect x="4" y="3" width="3" height="1" fill="#ffffff"/><rect x="7" y="3" width="2" height="1" fill="#0000f0"/><rect x="13" y="3" width="2" height="1" fill="#0000f0"/><rect x="15" y="3" width="5" height="1" fill="#ffffff"/><rect x="20" y="3" width="2" height="1" fill="#0000f0"/><rect x="0" y="4" width="2" height="1" fill="#0000f0"/><rect x="2" y="4" width="2" height="1" fill="#ffffff"/><rect x="4" y="4" width="2" height="1" fill="#505050"/><rect x="6" y="4" width="1" height="1" fill="#ffffff"/><rect x="7" y="4" width="2" height="1" fill="#0000f0"/><rect x="10" y="4" width="1" height="1" fill="#000080"/><rect x="13" y="4" width="2" height="1" fill="#0000f0"/><rect x="15" y="4" width="5" height="1" fill="#ffffff"/><rect x="20" y="4" width="2" height="1" fill="#0000f0"/><rect x="0" y="5" width="2" height="1" fill="#0000f0"/><rect x="2" y="5" width="1" height="1" fill="#ffffff"/><rect x="3" y="5" width="3" height="1" fill="#505050"/><rect x="6" y="5" width="1" height="1" fill="#ffffff"/><rect x="7" y="5" width="2" height="1" fill="#0000f0"/><rect x="10" y="5" width="2" height="1" fill="#000080"/><rect x="13" y="5" width="2" height="1" fill="#0000f0"/><rect x="15" y="5" width="5" height="1" fill="#505050"/><rect x="20" y="5" width="2" height="1" fill="#0000f0"/><rect x="0" y="6" width="2" height="1" fill="#0000f0"/><rect x="2" y="6" width="1" height="1" fill="#ffffff"/><rect x="3" y="6" width="1" height="1" fill="#505050"/><rect x="4" y="6" width="3" height="1" fill="#ffffff"/><rect x="7" y="6" width="2" height="1" fill="#0000f0"/><rect x="10" y="6" width="2" height="1" fill="#000080"/><rect x="13" y="6" width="2" height="1" fill="#0000f0"/><rect x="15" y="6" width="5" height="1" fill="#ffffff"/><rect x="20" y="6" width="2" height="1" fill="#0000f0"/><rect x="0" y="7" width="2" height="1" fill="#0000f0"/><rect x="2" y="7" width="2" height="1" fill="#ffffff"/><rect x="4" y="7" width="2" height="1" fill="#505050"/><rect x="6" y="7" width="1" height="1" fill="#ffffff"/><rect x="7" y="7" width="2" height="1" fill="#0000f0"/><rect x="10" y="7" width="1" height="1" fill="#000080"/><rect x="13" y="7" width="2" height="1" fill="#0000f0"/><rect x="15" y="7" width="5" height="1" fill="#ffffff"/><rect x="20" y="7" width="2" height="1" fill="#0000f0"/><rect x="0" y="8" width="2" height="1" fill="#0000f0"/><rect x="2" y="8" width="1" height="1" fill="#ffffff"/><rect x="3" y="8" width="3" height="1" fill="#505050"/><rect x="6" y="8" width="1" height="1" fill="#ffffff"/><rect x="7" y="8" width="2" height="1" fill="#0000f0"/><rect x="13" y="8" width="2" height="1" fill="#0000f0"/><rect x="15" y="8" width="5" height="1" fill="#505050"/><rect x="20" y="8" width="2" height="1" fill="#0000f0"/><rect x="0" y="9" width="2" height="1" fill="#0000f0"/><rect x="2" y="9" width="1" height="1" fill="#ffffff"/><rect x="3" y="9" width="1" height="1" fill="#505050"/><rect x="4" y="9" width="3" height="1" fill="#ffffff"/><rect x="7" y="9" width="2" height="1" fill="#0000f0"/><rect x="13" y="9" width="2" height="1" fill="#0000f0"/><rect x="15" y="9" width="5" height="1" fill="#ffffff"/><rect x="20" y="9" width="2" height="1" fill="#0000f0"/><rect x="0" y="10" width="2" height="1" fill="#0000f0"/><rect x="2" y="10" width="5" height="1" fill="#ffffff"/><rect x="7" y="10" width="2" height="1" fill="#0000f0"/><rect x="13" y="10" width="2" height="1" fill="#0000f0"/><rect x="15" y="10" width="5" height="1" fill="#ffffff"/><rect x="20" y="10" width="2" height="1" fill="#0000f0"/><rect x="0" y="11" width="9" height="1" fill="#0000f0"/><rect x="13" y="11" width="9" height="1" fill="#0000f0"/></svg>
<svg style="position:absolute;left:46px;top:486px" width="16" height="15" shape-rendering="crispEdges"><rect x="5" y="0" width="10" height="1" fill="#505050"/><rect x="4" y="1" width="1" height="1" fill="#505050"/><rect x="5" y="1" width="8" height="1" fill="#e6e6dc"/><rect x="13" y="1" width="1" height="1" fill="#505050"/><rect x="4" y="2" width="1" height="1" fill="#505050"/><rect x="5" y="2" width="1" height="1" fill="#e6e6dc"/><rect x="6" y="2" width="5" height="1" fill="#000000"/><rect x="11" y="2" width="1" height="1" fill="#e6e6dc"/><rect x="12" y="2" width="1" height="1" fill="#505050"/><rect x="3" y="3" width="1" height="1" fill="#505050"/><rect x="4" y="3" width="8" height="1" fill="#e6e6dc"/><rect x="12" y="3" width="1" height="1" fill="#505050"/><rect x="3" y="4" width="1" height="1" fill="#505050"/><rect x="4" y="4" width="1" height="1" fill="#e6e6dc"/><rect x="5" y="4" width="5" height="1" fill="#000000"/><rect x="10" y="4" width="1" height="1" fill="#e6e6dc"/><rect x="11" y="4" width="1" height="1" fill="#505050"/><rect x="13" y="4" width="1" height="1" fill="#000080"/><rect x="15" y="4" width="1" height="1" fill="#000080"/><rect x="1" y="5" width="12" height="1" fill="#000080"/><rect x="13" y="5" width="1" height="1" fill="#e6e6dc"/><rect x="14" y="5" width="1" height="1" fill="#000080"/><rect x="15" y="5" width="1" height="1" fill="#e6e6dc"/><rect x="0" y="6" width="14" height="1" fill="#000080"/><rect x="14" y="6" width="1" height="1" fill="#e6e6dc"/><rect x="15" y="6" width="1" height="1" fill="#000080"/><rect x="0" y="7" width="1" height="1" fill="#000080"/><rect x="1" y="7" width="11" height="1" fill="#e6e6dc"/><rect x="12" y="7" width="1" height="1" fill="#000080"/><rect x="13" y="7" width="1" height="1" fill="#e6e6dc"/><rect x="14" y="7" width="1" height="1" fill="#000080"/><rect x="15" y="7" width="1" height="1" fill="#e6e6dc"/><rect x="0" y="8" width="14" height="1" fill="#000080"/><rect x="14" y="8" width="1" height="1" fill="#e6e6dc"/><rect x="15" y="8" width="1" height="1" fill="#000080"/><rect x="0" y="9" width="1" height="1" fill="#000080"/><rect x="1" y="9" width="11" height="1" fill="#e6e6dc"/><rect x="12" y="9" width="2" height="1" fill="#000080"/><rect x="14" y="9" width="1" height="1" fill="#e6e6dc"/><rect x="15" y="9" width="1" height="1" fill="#000080"/><rect x="0" y="10" width="1" height="1" fill="#000080"/><rect x="1" y="10" width="11" height="1" fill="#e6e6dc"/><rect x="12" y="10" width="1" height="1" fill="#000080"/><rect x="13" y="10" width="1" height="1" fill="#e6e6dc"/><rect x="14" y="10" width="1" height="1" fill="#000080"/><rect x="15" y="10" width="1" height="1" fill="#e6e6dc"/><rect x="0" y="11" width="15" height="1" fill="#000080"/><rect x="1" y="12" width="1" height="1" fill="#000080"/><rect x="2" y="12" width="10" height="1" fill="#e6e6dc"/><rect x="12" y="12" width="1" height="1" fill="#000080"/><rect x="13" y="12" width="1" height="1" fill="#e6e6dc"/><rect x="14" y="12" width="1" height="1" fill="#000080"/><rect x="1" y="13" width="13" height="1" fill="#000080"/><rect x="2" y="14" width="11" height="1" fill="#000080"/></svg>
<svg style="position:absolute;left:0;top:0" width="100" height="518">
<path d="M78.6 489.2 Q79.5 486.3 82.2 486.3 Q85.8 486.4 85.6 489.4 Q85.3 491.6 83 492.8 Q81.7 493.6 81.7 496" fill="none" stroke="#c89a10" stroke-width="3.6" stroke-linecap="round" stroke-linejoin="round"/>
<path d="M78.6 489.2 Q79.5 486.3 82.2 486.3 Q85.8 486.4 85.6 489.4 Q85.3 491.6 83 492.8 Q81.7 493.6 81.7 496" fill="none" stroke="#ffd820" stroke-width="2.2" stroke-linecap="round" stroke-linejoin="round"/>
<rect x="80" y="498" width="3.4" height="3" rx="0.8" fill="#ffd820" stroke="#c89a10" stroke-width="0.8"/>
</svg>
<div class="btn" style="left:99px;top:483px;width:57px;height:19px;"></div>
<div class="t" style="left:-72.5px;width:400px;text-align:center;top:487px;font-size:12px;color:#000;letter-spacing:-0.1px;transform:scaleX(0.9167);transform-origin:50% 0;">E<u>x</u>pand</div>
<div class="btn" style="left:159px;top:483px;width:57px;height:19px;"></div>
<div class="t" style="left:-12.5px;width:400px;text-align:center;top:487px;font-size:12px;color:#000;letter-spacing:-0.1px;transform:scaleX(0.9167);transform-origin:50% 0;">C<u>o</u>llapse</div>
<div style="left:220px;top:480px;width:13px;height:13px;border:1px solid #8f8f8f;background:linear-gradient(135deg,#dcdcdc,#fbfbfb);box-shadow:inset 0 0 0 1px #f4f4f4;"></div>
<svg style="position:absolute;left:220px;top:480px" width="13" height="13"><path d="M3 6.5 L5.5 9.5 L10 2.5" fill="none" stroke="#3c50b4" stroke-width="1.8"/></svg>
<div style="left:220px;top:494px;width:13px;height:13px;border:1px solid #8f8f8f;background:linear-gradient(135deg,#dcdcdc,#fbfbfb);box-shadow:inset 0 0 0 1px #f4f4f4;"></div>
<div style="left:394px;top:480px;width:13px;height:13px;border:1px solid #8f8f8f;background:linear-gradient(135deg,#dcdcdc,#fbfbfb);box-shadow:inset 0 0 0 1px #f4f4f4;"></div>
<div style="left:394px;top:494px;width:13px;height:13px;border:1px solid #8f8f8f;background:linear-gradient(135deg,#dcdcdc,#fbfbfb);box-shadow:inset 0 0 0 1px #f4f4f4;"></div>
<svg style="position:absolute;left:394px;top:494px" width="13" height="13"><path d="M3 6.5 L5.5 9.5 L10 2.5" fill="none" stroke="#3c50b4" stroke-width="1.8"/></svg>
<div class="t" style="left:237px;top:481px;font-size:12px;color:#000;letter-spacing:-0.25px;transform:scaleX(0.9167);transform-origin:0 0;"><u>H</u>ide disabled lines (0)</div>
<div class="t" style="left:237px;top:495px;font-size:12px;color:#000;letter-spacing:-0.25px;transform:scaleX(0.9167);transform-origin:0 0;"><u>A</u>uto collapse assemblies</div>
<div class="t" style="left:410px;top:481px;font-size:12px;color:#000;letter-spacing:-0.25px;transform:scaleX(0.9167);transform-origin:0 0;"><u>H</u>ide qualifiers</div>
<div class="t" style="left:410px;top:495px;font-size:12px;color:#000;letter-spacing:-0.25px;transform:scaleX(0.9167);transform-origin:0 0;">Use D&amp;D</div>
<div style="position:absolute;left:524px;top:34px;width:88px;height:1px;background:#fff;"></div>
<div style="position:absolute;left:523px;top:35px;width:1px;height:1px;background:#fff;"></div>
<div style="position:absolute;left:522px;top:36px;width:1px;height:21px;background:#fff;"></div>
<div style="position:absolute;left:612px;top:35px;width:1px;height:22px;background:#a0a0a0;"></div>
<div style="position:absolute;left:613px;top:36px;width:1px;height:21px;background:#696969;"></div>
<div class="t" style="left:526px;top:39px;font-size:14px;color:#800000;letter-spacing:0.1px;transform:scaleX(0.9286);transform-origin:0 0;"><u>I</u>tem</div>
<div style="position:absolute;left:524px;top:57px;width:88px;height:1px;background:#fff;"></div>
<div style="position:absolute;left:523px;top:58px;width:1px;height:1px;background:#fff;"></div>
<div style="position:absolute;left:522px;top:59px;width:1px;height:19px;background:#fff;"></div>
<div style="position:absolute;left:612px;top:58px;width:1px;height:20px;background:#a0a0a0;"></div>
<div style="position:absolute;left:613px;top:59px;width:1px;height:19px;background:#696969;"></div>
<div class="t" style="left:526px;top:61px;font-size:14px;color:#800000;letter-spacing:0.9px;transform:scaleX(0.9286);transform-origin:0 0;"><u>T</u>ools</div>
<div style="position:absolute;left:524px;top:78px;width:88px;height:1px;background:#fff;"></div>
<div style="position:absolute;left:523px;top:79px;width:1px;height:1px;background:#fff;"></div>
<div style="position:absolute;left:522px;top:80px;width:1px;height:19px;background:#fff;"></div>
<div style="position:absolute;left:612px;top:79px;width:1px;height:20px;background:#a0a0a0;"></div>
<div style="position:absolute;left:613px;top:80px;width:1px;height:19px;background:#696969;"></div>
<div class="t" style="left:526px;top:83px;font-size:14px;color:#800000;letter-spacing:0.1px;transform:scaleX(0.9286);transform-origin:0 0;">Sho<u>w</u></div>
<div style="position:absolute;left:520px;top:99px;width:95px;height:374px;background:#f0f0f0;border-top:1px solid #fff;border-left:1px solid #fff;border-right:1px solid #a0a0a0;border-bottom:1px solid #a0a0a0;box-shadow:1px 1px 0 #696969;"></div>
<div class="t" style="left:526px;top:103px;font-size:14px;color:#000080;letter-spacing:0.2px;transform:scaleX(0.9286);transform-origin:0 0;"><u>E</u>dit</div>
<div style="position:absolute;left:525px;top:125px;width:87px;height:167px;border:1px solid #dcdcdc;box-shadow:inset 1px 1px 0 #fff, 1px 1px 0 #fff;"></div>
<div style="position:absolute;left:531px;top:119px;width:62px;height:12px;background:#f0f0f0;"></div>
<div class="t" style="left:534px;top:117px;font-size:14px;color:#000;transform:scaleX(0.9286);transform-origin:0 0;">Drag Item</div>
<div style="position:absolute;left:527px;top:131px;width:82px;height:158px;background:#fff;border-left:2px solid #696969;border-top:2px solid #696969;border-right:1px solid #f0f0f0;border-bottom:1px solid #fff;"></div>
<div class="t" style="left:531px;top:134px;font-size:12px;color:#000080;letter-spacing:0.05px;transform:scaleX(0.9167);transform-origin:0 0;">Assembly</div>
<div style="position:absolute;left:529px;top:145px;width:78px;height:1px;background:#e6e6e6;"></div>
<div class="t" style="left:531px;top:147px;font-size:12px;color:#000080;letter-spacing:0.05px;transform:scaleX(0.9167);transform-origin:0 0;">Method</div>
<div style="position:absolute;left:529px;top:158px;width:78px;height:1px;background:#e6e6e6;"></div>
<div class="t" style="left:531px;top:160px;font-size:12px;color:#000080;letter-spacing:0.05px;transform:scaleX(0.9167);transform-origin:0 0;">Step</div>
<div style="position:absolute;left:529px;top:171px;width:78px;height:1px;background:#e6e6e6;"></div>
<div class="t" style="left:531px;top:173px;font-size:12px;color:#000080;letter-spacing:0.05px;transform:scaleX(0.9167);transform-origin:0 0;">Part</div>
<div style="position:absolute;left:529px;top:184px;width:78px;height:1px;background:#e6e6e6;"></div>
<div class="t" style="left:531px;top:186px;font-size:12px;color:#000080;letter-spacing:0.05px;transform:scaleX(0.9167);transform-origin:0 0;">Tool</div>
<div style="position:absolute;left:529px;top:197px;width:78px;height:1px;background:#e6e6e6;"></div>
<div class="t" style="left:531px;top:199px;font-size:12px;color:#000080;letter-spacing:0.05px;transform:scaleX(0.9167);transform-origin:0 0;">Resource</div>
<div style="position:absolute;left:529px;top:210px;width:78px;height:1px;background:#e6e6e6;"></div>
<div class="t" style="left:531px;top:212px;font-size:12px;color:#000080;letter-spacing:0.05px;transform:scaleX(0.9167);transform-origin:0 0;">SubCon</div>
<div style="position:absolute;left:529px;top:223px;width:78px;height:1px;background:#e6e6e6;"></div>
<div class="t" style="left:531px;top:225px;font-size:12px;color:#000080;letter-spacing:0.05px;transform:scaleX(0.9167);transform-origin:0 0;">BuyPart</div>
<div style="position:absolute;left:529px;top:236px;width:78px;height:1px;background:#e6e6e6;"></div>
<div class="t" style="left:531px;top:238px;font-size:12px;color:#000080;letter-spacing:0.05px;transform:scaleX(0.9167);transform-origin:0 0;">Output</div>
<div style="position:absolute;left:529px;top:249px;width:78px;height:1px;background:#e6e6e6;"></div>
<div class="t" style="left:531px;top:251px;font-size:12px;color:#000080;letter-spacing:0.05px;transform:scaleX(0.9167);transform-origin:0 0;">Return</div>
<div style="position:absolute;left:529px;top:262px;width:78px;height:1px;background:#e6e6e6;"></div>
<div class="t" style="left:531px;top:264px;font-size:12px;color:#000080;letter-spacing:0.05px;transform:scaleX(0.9167);transform-origin:0 0;">OutputPart</div>
<div style="position:absolute;left:529px;top:275px;width:78px;height:1px;background:#e6e6e6;"></div>
<div class="t" style="left:531px;top:277px;font-size:12px;color:#000080;letter-spacing:0.05px;transform:scaleX(0.9167);transform-origin:0 0;">DoProcess</div>
<div style="position:absolute;left:529px;top:288px;width:78px;height:1px;background:#e6e6e6;"></div>
<div style="position:absolute;left:525px;top:300px;width:87px;height:169px;border:1px solid #dcdcdc;box-shadow:inset 1px 1px 0 #fff, 1px 1px 0 #fff;"></div>
<div style="position:absolute;left:531px;top:292px;width:68px;height:12px;background:#f0f0f0;"></div>
<div class="t" style="left:533px;top:293px;font-size:14px;color:#000;letter-spacing:0.1px;transform:scaleX(0.9286);transform-origin:0 0;"><u>V</u>ia Library</div>
<div class="btn" style="left:529px;top:309px;width:78px;height:18px;"></div>
<div class="t" style="left:368.0px;width:400px;text-align:center;top:312px;font-size:12px;color:#000;letter-spacing:-0.2px;transform:scaleX(0.9167);transform-origin:50% 0;">+Proce<u>s</u>s</div>
<div class="btn" style="left:529px;top:329px;width:78px;height:18px;"></div>
<div class="t" style="left:368.0px;width:400px;text-align:center;top:332px;font-size:12px;color:#000;letter-spacing:-0.2px;transform:scaleX(0.9167);transform-origin:50% 0;">+<u>P</u>art</div>
<div class="btn" style="left:529px;top:349px;width:78px;height:18px;"></div>
<div class="t" style="left:368.0px;width:400px;text-align:center;top:352px;font-size:12px;color:#000;letter-spacing:-0.2px;transform:scaleX(0.9167);transform-origin:50% 0;">+Resource</div>
<div class="btn" style="left:529px;top:369px;width:78px;height:18px;"></div>
<div class="t" style="left:368.0px;width:400px;text-align:center;top:372px;font-size:12px;color:#000;letter-spacing:-0.2px;transform:scaleX(0.9167);transform-origin:50% 0;">+Group</div>
<div class="btn" style="left:529px;top:389px;width:78px;height:18px;"></div>
<div class="t" style="left:368.0px;width:400px;text-align:center;top:392px;font-size:12px;color:#000;letter-spacing:-0.2px;transform:scaleX(0.9167);transform-origin:50% 0;">+Contractor</div>
<div class="btn" style="left:529px;top:409px;width:78px;height:18px;"></div>
<div class="t" style="left:368.0px;width:400px;text-align:center;top:412px;font-size:12px;color:#000;letter-spacing:-0.2px;transform:scaleX(0.9167);transform-origin:50% 0;">+Tool</div>
<div class="btn" style="left:529px;top:429px;width:78px;height:18px;"></div>
<div class="t" style="left:368.0px;width:400px;text-align:center;top:432px;font-size:12px;color:#000;letter-spacing:-0.2px;transform:scaleX(0.9167);transform-origin:50% 0;">+Do</div>
<div class="btn" style="left:529px;top:449px;width:78px;height:18px;"></div>
<div class="t" style="left:368.0px;width:400px;text-align:center;top:452px;font-size:12px;color:#000;letter-spacing:-0.2px;transform:scaleX(0.9167);transform-origin:50% 0;">+Output</div>
<div class="btn" style="left:529px;top:483px;width:78px;height:18px;"></div>
<div class="t" style="left:368.0px;width:400px;text-align:center;top:486px;font-size:12px;color:#000;letter-spacing:-0.1px;transform:scaleX(0.9167);transform-origin:50% 0;"><u>C</u>lose</div>
</body></html>
